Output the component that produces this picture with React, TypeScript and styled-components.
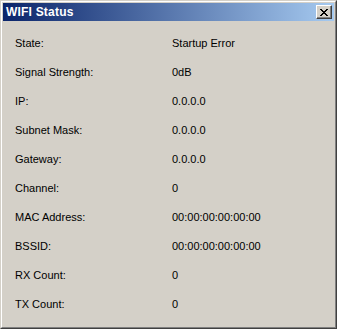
import styled, { createGlobalStyle } from 'styled-components'

const Global = createGlobalStyle`
    html, body {
        margin: 0;
        padding: 0;
        background: #d4d0c8;
    }
`

const Window = styled.div`
    box-sizing: border-box;
    width: 337px;
    height: 329px;
    background: #d4d0c8;
    border-top: 1px solid #d4d0c8;
    border-left: 1px solid #d4d0c8;
    border-right: 1px solid #404040;
    border-bottom: 1px solid #404040;
    font-family: Tahoma, "DejaVu Sans", "Liberation Sans", sans-serif;
    display: flex;
    flex-direction: column;
`

const Frame = styled.div`
    flex: 1;
    display: flex;
    flex-direction: column;
    border-top: 1px solid #ffffff;
    border-left: 1px solid #ffffff;
    border-right: 1px solid #808080;
    border-bottom: 1px solid #808080;
    padding: 1px;
`

const TitleBar = styled.div`
    height: 18px;
    display: flex;
    align-items: center;
    justify-content: space-between;
    padding: 0 2px 0 3px;
    background: linear-gradient(to right, #0a246a, #a6caf0);
`

const Title = styled.span`
    color: #ffffff;
    font-family: "Liberation Sans", sans-serif;
    font-weight: bold;
    font-size: 12px;
    letter-spacing: 0.2px;
`

const CloseButton = styled.div`
    box-sizing: border-box;
    width: 16px;
    height: 14px;
    background: #d4d0c8;
    border-top: 1px solid #ffffff;
    border-left: 1px solid #ffffff;
    border-right: 1px solid #404040;
    border-bottom: 1px solid #404040;
    box-shadow: inset -1px -1px 0 #808080;
    display: flex;
    align-items: center;
    justify-content: center;
`

const Body = styled.div`
    display: flex;
    flex-direction: column;
    gap: 15px;
    padding: 15px 0 0 12px;
`

const Row = styled.div`
    display: grid;
    grid-template-columns: 157px 1fr;
    height: 14px;
    line-height: 14px;
    font-family: "Liberation Sans", sans-serif;
    font-size: 11px;
    color: #000000;
`

const rows: [string, string][] = [
    ['State:', 'Startup Error'],
    ['Signal Strength:', '0dB'],
    ['IP:', '0.0.0.0'],
    ['Subnet Mask:', '0.0.0.0'],
    ['Gateway:', '0.0.0.0'],
    ['Channel:', '0'],
    ['MAC Address:', '00:00:00:00:00:00'],
    ['BSSID:', '00:00:00:00:00:00'],
    ['RX Count:', '0'],
    ['TX Count:', '0'],
]

export default function App() {
    return (
        <>
            <Global />
            <Window>
                <Frame>
                    <TitleBar>
                        <Title>WIFI Status</Title>
                        <CloseButton>
                            <svg width="8" height="7" viewBox="0 0 8 7">
                                <path d="M0 0h2v1h1v1h2V1h1V0h2v1H7v1H6v1H5v1h1v1h1v1h1v1H6V6H5V5H3v1H2v1H0V6h1V5h1V4h1V3H2V2H1V1H0z" fill="#000" />
                            </svg>
                        </CloseButton>
                    </TitleBar>
                    <Body>
                        {rows.map(([k, v]) => (
                            <Row key={k}>
                                <span>{k}</span>
                                <span>{v}</span>
                            </Row>
                        ))}
                    </Body>
                </Frame>
            </Window>
        </>
    )
}
